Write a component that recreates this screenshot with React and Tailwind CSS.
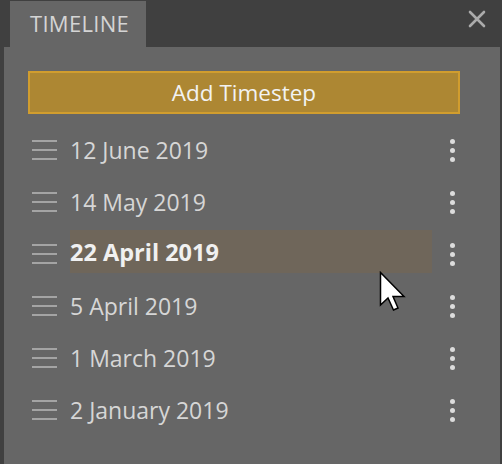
import React from "react";

const dates = [
  "12 June 2019",
  "14 May 2019",
  "22 April 2019",
  "5 April 2019",
  "1 March 2019",
  "2 January 2019",
];

const Handle = () => (
  <div className="flex flex-col gap-[7px] w-[25px] shrink-0">
    <div className="h-[2px] bg-[#a4a4a4]" />
    <div className="h-[2px] bg-[#a4a4a4]" />
    <div className="h-[2px] bg-[#a4a4a4]" />
  </div>
);

const Kebab = () => (
  <div className="flex flex-col items-center gap-[4px] w-[6px]">
    <div className="w-[5px] h-[5px] rounded-full bg-[#dcdcdc]" />
    <div className="w-[5px] h-[5px] rounded-full bg-[#dcdcdc]" />
    <div className="w-[5px] h-[5px] rounded-full bg-[#dcdcdc]" />
  </div>
);

const Cursor = () => (
  <svg className="absolute left-[379px] top-[271px]" width="30" height="42" viewBox="0 0 30 42">
    <path
      d="M1.5 1.5 L1.5 34 L9 27 L14.5 39 L19 37 L14 25.5 L25 25.5 Z"
      fill="#ffffff"
      stroke="#000000"
      strokeWidth="1.5"
      strokeLinejoin="miter"
    />
  </svg>
);

const App = () => {
  const active = 2;

  return (
    <div
      className="relative w-[502px] h-[464px] overflow-hidden bg-[#404040] flex flex-col"
      style={{ fontFamily: "'Open Sans', 'Noto Sans', sans-serif" }}
    >
      {/* header with tab */}
      <div className="h-[47px] flex items-end pl-[10px] pr-[15px] shrink-0">
        <div className="w-[136px] h-[46px] bg-[#666666] flex items-center pl-[20px] pb-[1px]">
          <span className="text-[22px] text-[#d4d4d4] tracking-[0.3px]">TIMELINE</span>
        </div>
        <div className="ml-auto self-start mt-[9px]">
          <svg width="20" height="20" viewBox="0 0 20 20">
            <path d="M3 3 L17 17 M17 3 L3 17" stroke="#ababab" strokeWidth="2.6" strokeLinecap="round" />
          </svg>
        </div>
      </div>

      {/* panel */}
      <div className="flex-1 ml-[4px] mr-[2px] bg-[#666666] pt-[24px] pl-[24px] pr-[38px]">
        <button className="w-[432px] h-[43px] bg-[#ad8733] border-2 border-[#d19d2e] text-[#f2f2f2] text-[22.5px] flex items-center justify-center">
          Add Timestep
        </button>

        <div className="mt-[10px] flex flex-col">
          {dates.map((d, i) => (
            <div key={d} className="h-[52px] flex items-center">
              <div className="pl-[4px] pr-[13px]">
                <Handle />
              </div>
              <div
                className={
                  i === active
                    ? "w-[362px] h-[43px] -mt-[6px] flex items-center bg-[#6f665a] text-[#f0f0f0] font-bold text-[23.5px] pt-[4px]"
                    : "w-[362px] h-[43px] flex items-center text-[#d6d6d6] text-[23px]"
                }
              >
                {d}
              </div>
              <div className="ml-[17px]">
                <Kebab />
              </div>
            </div>
          ))}
        </div>
      </div>

      <Cursor />
    </div>
  );
};

export default App;
